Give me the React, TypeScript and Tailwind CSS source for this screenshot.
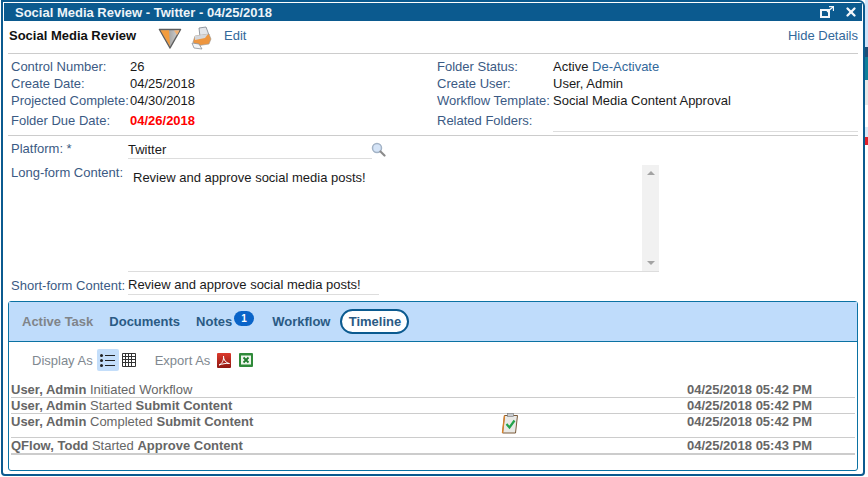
import { X } from 'lucide-react'

const font = { fontFamily: '"Liberation Sans", Arial, sans-serif' }

function Field({ label, children, labelWidth }: { label: string; children: React.ReactNode; labelWidth: string }) {
  return (
    <div className="flex h-[17px] items-center whitespace-nowrap">
      <span className={`${labelWidth} text-[#3b5a84]`}>{label}</span>
      <span className="text-[#1a1a1a]">{children}</span>
    </div>
  )
}

function PopoutIcon() {
  return (
    <svg width="14" height="12" viewBox="0 0 14 12" fill="none" stroke="#f2f6fa">
      <path d="M1 4h8v7H1z" strokeWidth="2" />
      <path d="M7 6l6-5" strokeWidth="1.300" />
      <path d="M9 .5h4.500V5" strokeWidth="1.300" />
    </svg>
  )
}

function FilterIcon() {
  return (
    <svg width="24" height="21" viewBox="0 0 24 21">
      <defs>
        <linearGradient id="filterGray" x1="0" y1="0" x2="1" y2="0">
          <stop offset="0" stopColor="#7d7d7d" />
          <stop offset="1" stopColor="#d9d9d9" />
        </linearGradient>
      </defs>
      <path d="M1.500 1.500h21L12 20z" fill="url(#filterGray)" stroke="#5f5f5f" strokeWidth="1.500" strokeLinejoin="round" />
      <path d="M2.500 2.200h8.500l1 16z" fill="#f39c3d" />
      <path d="M16 2.500h5.500l-2.500 4.500z" fill="#f4b272" />
    </svg>
  )
}

function PrintIcon() {
  return (
    <svg width="22" height="24" viewBox="0 0 22 24">
      <path d="M9 2l7-1 3 8-9 2z" fill="#e4e6ea" stroke="#7d838b" strokeWidth="0.800" />
      <path d="M5 10l14-2 2 5-2 5-13 2-3-4z" fill="#ee963f" stroke="#9a9a9a" strokeWidth="0.600" />
      <path d="M5 10l13-2-3 4-10 2z" fill="#d4d7dc" />
      <path d="M2 17l7 1 3 5-8-1z" fill="#f4f5f6" stroke="#8a8f96" strokeWidth="0.800" />
    </svg>
  )
}

function SearchIcon() {
  return (
    <svg width="15" height="15" viewBox="0 0 15 15">
      <circle cx="6" cy="6" r="4.500" fill="#d5e4f7" stroke="#a3b3c6" strokeWidth="1.500" />
      <path d="M9.500 9.500L13.500 13.500" stroke="#8b8b8b" strokeWidth="2.200" strokeLinecap="round" />
    </svg>
  )
}

function ListIcon() {
  return (
    <svg width="15" height="13" viewBox="0 0 15 13" fill="#222">
      <circle cx="1.500" cy="1.500" r="1.500" />
      <circle cx="1.500" cy="6.500" r="1.500" />
      <circle cx="1.500" cy="11.500" r="1.500" />
      <rect x="5" y="1" width="10" height="1" />
      <rect x="5" y="6" width="10" height="1" />
      <rect x="5" y="11" width="10" height="1" />
    </svg>
  )
}

function GridIcon() {
  return (
    <svg width="14" height="14" viewBox="0 0 14 14" fill="none" stroke="#333" strokeWidth="1">
      <path d="M.5.5h13v13H.5zM.5 3.500h13M.5 6.500h13M.5 9.500h13M3.500.5v13M6.500.5v13M9.500.5v13" />
    </svg>
  )
}

function PdfIcon() {
  return (
    <svg width="14" height="15" viewBox="0 0 14 15">
      <defs>
        <linearGradient id="pdfRed" x1="0" y1="0" x2="0" y2="1">
          <stop offset="0" stopColor="#dc3a2c" />
          <stop offset="1" stopColor="#8f1712" />
        </linearGradient>
      </defs>
      <rect width="14" height="15" rx="1" fill="url(#pdfRed)" />
      <path d="M2 12c3-1 5-5 4.500-9C6.500 7 9 10 12.500 10.500 9 10 5 11 2 12z" fill="none" stroke="#fff" strokeWidth="1" />
    </svg>
  )
}

function ExcelIcon() {
  return (
    <svg width="14" height="14" viewBox="0 0 14 14">
      <rect width="14" height="14" rx="1" fill="#2f8a3a" />
      <rect x="2" y="2.500" width="10" height="9" fill="#eef6ec" />
      <path d="M4.500 4.500l5 5M9.500 4.500l-5 5" stroke="#1e7a2c" strokeWidth="1.800" />
    </svg>
  )
}

function ClipboardIcon() {
  return (
    <svg width="18" height="21" viewBox="0 0 18 21">
      <path d="M3.500 2.500h13L14.500 20h-13z" fill="#e9e9e6" stroke="#7a5a3a" strokeWidth="1" />
      <path d="M1.500 20l2-17.500" stroke="#d9822b" strokeWidth="1.400" />
      <rect x="6.500" y="0.500" width="6" height="3" fill="#c9ccd0" stroke="#777" strokeWidth="0.600" />
      <path d="M5.500 11l3 3.500 5-7" fill="none" stroke="#22a34a" strokeWidth="2.200" />
    </svg>
  )
}

function TimelineRow({ children, time, icon, rowClass }: { children: React.ReactNode; time: string; icon?: boolean; rowClass: string }) {
  return (
    <div className={`relative flex items-start justify-between ${rowClass}`}>
      <span className="text-[#666]">{children}</span>
      {icon && (
        <span className="absolute left-[490px] top-[-1px]">
          <ClipboardIcon />
        </span>
      )}
      <span className="mr-[43px] font-bold text-[#666]">{time}</span>
    </div>
  )
}

export default function App() {
  return (
    <div className="flex h-[477px] w-[868px] overflow-hidden bg-white pl-[1px] text-[13px] leading-[15px]" style={font}>
      <div className="flex h-[476px] w-[864px] shrink-0 flex-col overflow-hidden rounded-tr-[6px] rounded-bl-[4px] rounded-br-[4px] border-2 border-[#0b5a8f] bg-white p-[1px]">
        <div className="flex h-[18px] shrink-0 items-center justify-between bg-[#0b5a8f] pl-[11px] pr-[4px] text-[#eef4f8]">
          <span className="font-bold">Social Media Review - Twitter - 04/25/2018</span>
          <span className="flex items-center gap-[10px]">
            <PopoutIcon />
            <X size={14} strokeWidth={4} color="#f2f6fa" />
          </span>
        </div>

        <div className="ml-[4px] mr-[4px] flex h-[33px] shrink-0 items-center border-b border-[#cccccc] pb-[4px] pl-[1px]">
          <span className="w-[149px] font-bold text-[#111]">Social Media Review</span>
          <span className="mt-[6px]">
            <FilterIcon />
          </span>
          <span className="ml-[8px] mt-[6px]">
            <PrintIcon />
          </span>
          <a className="ml-[12px] text-[#33689a]">Edit</a>
          <a className="ml-auto text-[#33689a]">Hide Details</a>
        </div>

        <div className="mx-[4px] flex h-[82px] shrink-0 border-b border-[#cccccc] pl-[3px] pt-[4px]">
          <div className="w-[426px]">
            <Field label="Control Number:" labelWidth="w-[119px]">26</Field>
            <Field label="Create Date:" labelWidth="w-[119px]">04/25/2018</Field>
            <Field label="Projected Complete:" labelWidth="w-[119px]">04/30/2018</Field>
            <div className="mt-[3px]">
              <Field label="Folder Due Date:" labelWidth="w-[119px]">
                <span className="font-bold text-[#ff0000]">04/26/2018</span>
              </Field>
            </div>
          </div>
          <div>
            <Field label="Folder Status:" labelWidth="w-[116px]">
              Active <span className="text-[#33689a]">De-Activate</span>
            </Field>
            <Field label="Create User:" labelWidth="w-[116px]">User, Admin</Field>
            <Field label="Workflow Template:" labelWidth="w-[116px]">Social Media Content Approval</Field>
            <div className="mt-[3px] flex">
              <Field label="Related Folders:" labelWidth="w-[116px]">{''}</Field>
              <span className="h-[20px] w-[305px] border-b border-[#dddddd]" />
            </div>
          </div>
        </div>

        <div className="flex h-[23px] shrink-0 items-start pl-[7px]">
          <span className="w-[117px] pt-[5px] text-[#3b5a84]">Platform: *</span>
          <span className="flex h-[23px] w-[244px] items-center border-b border-[#dddddd] pt-[4px] text-[#1a1a1a]">Twitter</span>
          <span className="mt-[6px] -ml-[1px]">
            <SearchIcon />
          </span>
        </div>

        <div className="flex h-[113px] shrink-0 pl-[7px]">
          <span className="w-[117px] pt-[6px] text-[#3b5a84]">Long-form Content:</span>
          <div className="flex h-[113px] w-[531px] border-b border-[#dddddd] pt-[6px]">
            <span className="flex-1 pl-[5px] pt-[5px] text-[#1a1a1a]">Review and approve social media posts!</span>
            <div className="flex h-[106px] w-[17px] flex-col items-center justify-between bg-[#f1f1f1] py-[6px]">
              <span className="h-0 w-0 border-x-[4px] border-b-[4px] border-x-transparent border-b-[#a3a3a3]" />
              <span className="h-0 w-0 border-x-[4px] border-t-[4px] border-x-transparent border-t-[#a3a3a3]" />
            </div>
          </div>
        </div>

        <div className="flex h-[23px] shrink-0 items-center pl-[7px]">
          <span className="w-[117px] pt-[3px] text-[#3b5a84]">Short-form Content:</span>
          <span className="flex h-[23px] w-[251px] items-center border-b border-[#dddddd] pt-[3px] text-[#1a1a1a]">Review and approve social media posts!</span>
        </div>

        <div className="mx-[4px] mt-[6px] flex h-[170px] w-[850px] shrink-0 flex-col rounded-[3px] border border-[#0b72a3]">
          <div className="flex h-[40px] shrink-0 items-center gap-[16px] border-b border-[#0b72a3] bg-[#bfdcfb] pl-[13px] font-bold text-[#2a5a84]">
            <span className="text-[#7f8489]">Active Task</span>
            <span>Documents</span>
            <span className="relative mr-[24px]">
              Notes
              <span className="absolute left-[38px] top-[-3px] flex h-[15px] w-[20px] items-center justify-center rounded-full bg-[#0a64c8] text-[10px] leading-none text-white">1</span>
            </span>
            <span>Workflow</span>
            <span className="-ml-[6px] flex h-[25px] w-[69px] items-center justify-center rounded-full border-2 border-[#0b5a8f] bg-white">Timeline</span>
          </div>

          <div className="flex h-[36px] shrink-0 items-center pl-[23px] text-[#808890]">
            <span>Display As</span>
            <span className="ml-[4px] flex h-[22px] w-[22px] items-center justify-center rounded-[2px] bg-[#c4defa]">
              <ListIcon />
            </span>
            <span className="ml-[3px]">
              <GridIcon />
            </span>
            <span className="ml-[19px]">Export As</span>
            <span className="ml-[7px]">
              <PdfIcon />
            </span>
            <span className="ml-[8px]">
              <ExcelIcon />
            </span>
          </div>

          <div className="mx-[2px] mt-[4px]">
            <TimelineRow time="04/25/2018 05:42 PM" rowClass="h-[16px] border-b border-[#cccccc]">
              <b>User, Admin</b> Initiated Workflow
            </TimelineRow>
            <TimelineRow time="04/25/2018 05:42 PM" rowClass="h-[16px] border-b border-[#cccccc]">
              <b>User, Admin</b> Started <b>Submit Content</b>
            </TimelineRow>
            <TimelineRow time="04/25/2018 05:42 PM" icon rowClass="h-[24px] border-b border-[#cccccc]">
              <b>User, Admin</b> Completed <b>Submit Content</b>
            </TimelineRow>
            <TimelineRow time="04/25/2018 05:43 PM" rowClass="h-[17px] border-b-2 border-[#cccccc]">
              <b>QFlow, Todd</b> Started <b>Approve Content</b>
            </TimelineRow>
          </div>
        </div>
      </div>

      <div className="flex w-[3px] shrink-0 flex-col">
        <div className="h-[47px] bg-[#cfe4fa]" />
        <div className="h-[10px] bg-[#1c4f78]" />
        <div className="h-[23px] bg-[#0e7f9a]" />
        <div className="h-[25px] bg-[#e8e8e8]" />
        <div className="h-[22px] bg-white" />
        <div className="h-[10px] bg-[#dbe9f7]" />
        <div className="h-[8px] bg-[#e0202a]" />
      </div>
    </div>
  )
}
